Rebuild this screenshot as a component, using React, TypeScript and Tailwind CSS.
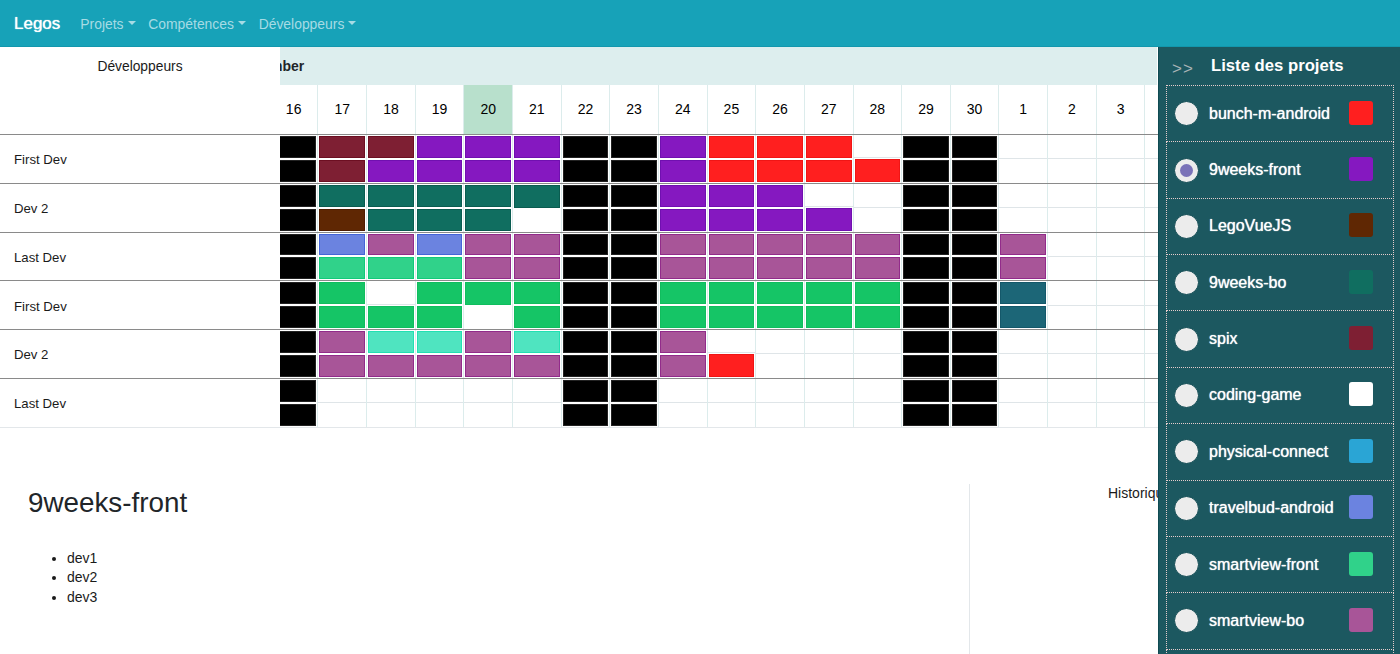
const font = "[font-family:'Liberation_Sans',Arial,sans-serif]";

type Project = { name: string; swatch: string };
const projects: Project[] = [
  { name: "bunch-m-android", swatch: "bg-[#ff1f1f]" },
  { name: "9weeks-front", swatch: "bg-[#8518c0]" },
  { name: "LegoVueJS", swatch: "bg-[#5f2703]" },
  { name: "9weeks-bo", swatch: "bg-[#106e60]" },
  { name: "spix", swatch: "bg-[#7e1f33]" },
  { name: "coding-game", swatch: "bg-white" },
  { name: "physical-connect", swatch: "bg-[#2aa5d5]" },
  { name: "travelbud-android", swatch: "bg-[#6b83e0]" },
  { name: "smartview-front", swatch: "bg-[#30d28a]" },
  { name: "smartview-bo", swatch: "bg-[#a85598]" },
];

const bars: Record<string, string> = {
  K: "bg-black border-[#222]",
  R: "bg-[#ff1f1f] border-[#f01515]",
  P: "bg-[#8518c0] border-[#7010b0]",
  W: "bg-[#7e1f33] border-[#6d0f22]",
  D: "bg-[#106e60] border-[#0a5c50]",
  B: "bg-[#5f2703] border-[#4e1c00]",
  L: "bg-[#6b83e0] border-[#4565d8]",
  S: "bg-[#30d28a] border-[#12ca7a]",
  O: "bg-[#a85598] border-[#922b8a]",
  G: "bg-[#15c566] border-[#10bd5e]",
  T: "bg-[#4fe4c0] border-[#22e0b2]",
  N: "bg-[#1c6677] border-[#14586a]",
};

const days = [16, 17, 18, 19, 20, 21, 22, 23, 24, 25, 26, 27, 28, 29, 30, 1, 2, 3, 4];

// One letter per day, "." is an empty half-cell
const rows = [
  { dev: "First Dev", top: "KWWPPPKKPRRR.KK....", bottom: "KWPPPPKKPRRRRKK...." },
  { dev: "Dev 2", top: "KDDDDDKKPPP..KK....", bottom: "KBDDD.KKPPPP.KK...." },
  { dev: "Last Dev", top: "KLOLOOKKOOOOOKKO...", bottom: "KSSSOOKKOOOOOKKO..." },
  { dev: "First Dev", top: "KG.GGGKKGGGGGKKN...", bottom: "KGGG.GKKGGGGGKKN..." },
  { dev: "Dev 2", top: "KOTTOTKKO....KK....", bottom: "KOOOOOKKOR...KK...." },
  { dev: "Last Dev", top: "K.....KK.....KK....", bottom: "K.....KK.....KK...." },
];

function Half({ code, top }: { code: string; top?: boolean }) {
  const line = top ? "border-b border-[#dfe5e8]" : "";
  return (
    <div className={`flex-1 min-h-0 ${code === "." ? line : "p-px"}`}>
      {code !== "." && <div className={`h-full border ${bars[code]}`} />}
    </div>
  );
}

function NavLink({ label }: { label: string }) {
  return (
    <div className="flex items-center gap-[4px] text-[13.9px] text-[#a6dbe4]">
      <span>{label}</span>
      <span className="mt-[-1px] h-0 w-0 border-x-[4px] border-t-[4px] border-x-transparent border-t-[#a6dbe4]" />
    </div>
  );
}

export default function App() {
  return (
    <div className={`relative h-[654px] w-[1400px] overflow-hidden bg-white text-[#212529] ${font}`}>
      <nav className="flex h-[47px] items-center border-b border-[#1297ad] bg-[#17a2b8] pl-[14px] pt-[2px]">
        <span className="mr-[20px] text-[17px] text-white [text-shadow:0_0_1px_#ffffff]">Legos</span>
        <div className="flex gap-[12.7px]">
          <NavLink label="Projets" />
          <NavLink label="Compétences" />
          <NavLink label="Développeurs" />
        </div>
      </nav>

      <section className="flex w-[1158px]">
        <div className="w-[280px] shrink-0 text-[13.8px] text-[#1a1a1a]">
          <div className="flex h-[38px] items-center justify-center pt-[2px]">Développeurs</div>
          <div className="h-[50px] border-b border-[#8a8a8a]" />
          {rows.map((r, i) => (
            <div
              key={i}
              className={`flex h-[48.75px] items-center border-b pl-[14px] pt-[3px] text-[13.2px] ${
                i === rows.length - 1 ? "border-[#e3e7ea]" : "border-[#8a8a8a]"
              }`}
            >
              {r.dev}
            </div>
          ))}
        </div>

        <div className="min-w-0 flex-1 overflow-hidden">
          <div className="ml-[-10.2px] w-[1000px]">
            <div className="flex h-[38px] w-[887px] items-center bg-[#ddeeee]">
              <span className="ml-[-38px] text-[14px] font-bold">September</span>
            </div>
            <div className="flex h-[50px] border-b border-[#8a8a8a]">
              {days.map((d) => (
                <div
                  key={d}
                  className={`flex w-[48.65px] shrink-0 items-center justify-center border-r border-[#dcecec] text-[14px] text-black ${
                    d === 20 ? "bg-[#b8e0cc]" : ""
                  }`}
                >
                  {d}
                </div>
              ))}
            </div>
            {rows.map((r, i) => (
              <div
                key={i}
                className={`flex h-[48.75px] border-b ${
                  i === rows.length - 1 ? "border-[#e3e7ea]" : "border-[#8a8a8a]"
                }`}
              >
                {days.map((d, j) => (
                  <div key={d} className="flex w-[48.65px] shrink-0 flex-col border-r border-[#dcecec]">
                    <Half code={r.top[j]} top />
                    <Half code={r.bottom[j]} />
                  </div>
                ))}
              </div>
            ))}
          </div>
        </div>
      </section>

      <section className="mt-[56px] flex h-[200px] w-[1158px] overflow-hidden">
        <div className="w-[970px] shrink-0 border-r border-[#e3e7ea] pl-[28px] pt-[2px]">
          <h1 className="text-[27.8px] leading-[34px] text-[#212529]">9weeks-front</h1>
          <ul className="mt-[29px] list-disc pl-[39px] text-[14px] leading-[19.5px] text-[#1a1a1a]">
            <li>dev1</li>
            <li>dev2</li>
            <li>dev3</li>
          </ul>
        </div>
        <div className="flex-1 whitespace-nowrap pl-[138px] text-[14px] leading-[18px] text-[#1a1a1a]">
          Historique
        </div>
      </section>

      <aside className="absolute bottom-0 right-0 top-[47px] w-[242px] overflow-hidden border-l border-[#0f4a52] bg-[#1c5860] pl-[7px] pr-[6px]">
        <div className="flex h-[38px] items-center">
          <span className="ml-[6px] mt-[6px] w-[39px] text-[17px] tracking-[1px] text-[#a9b4b6]">&gt;&gt;</span>
          <span className="text-[16.7px] font-bold text-white">Liste des projets</span>
        </div>
        {projects.map((p, i) => (
          <div
            key={p.name}
            className="-mb-px flex h-[57.36px] items-center border border-dotted border-[#e6cccc] pl-[7px] pr-[20px]"
          >
            <span className="flex h-[25px] w-[25px] shrink-0 items-center justify-center rounded-full border border-[#0f4a52] bg-[#ececec]">
              {i === 1 && <span className="h-[13px] w-[13px] rounded-full bg-[#7a72b8]" />}
            </span>
            <span className="ml-[10px] flex-1 whitespace-nowrap text-[16px] text-white [text-shadow:0_0_1px_#ffffff]">
              {p.name}
            </span>
            <span className={`mb-[2px] h-[24px] w-[24px] shrink-0 rounded-[3px] ${p.swatch}`} />
          </div>
        ))}
        <div className="h-[20px] border-x border-t border-dotted border-[#e6cccc]" />
      </aside>
    </div>
  );
}
